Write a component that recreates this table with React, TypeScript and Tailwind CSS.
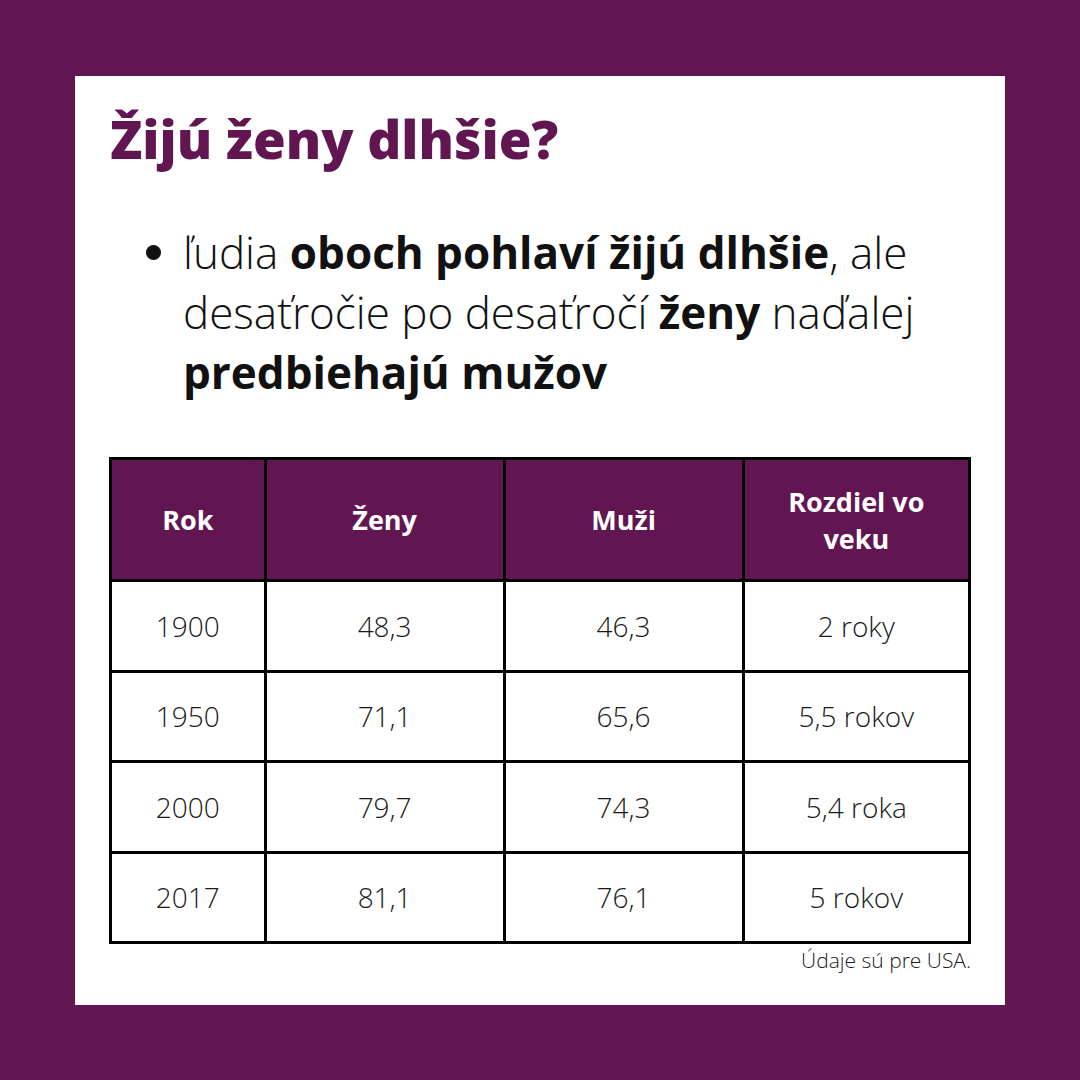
const font = { fontFamily: '"Open Sans", "Noto Sans", sans-serif' };

const rows = [
  ["1900", "48,3", "46,3", "2 roky"],
  ["1950", "71,1", "65,6", "5,5 rokov"],
  ["2000", "79,7", "74,3", "5,4 roka"],
  ["2017", "81,1", "76,1", "5 rokov"],
];

const headers = ["Rok", "Ženy", "Muži", "Rozdiel vo veku"];
const widths = ["w-[155px]", "w-[240px]", "w-[240px]", "w-[227px]"];

export default function App() {
  return (
    <div
      className="w-[1080px] h-[1080px] bg-[#621651] pt-[76px] pl-[75px]"
      style={font}
    >
      <div className="w-[930px] h-[929px] bg-white px-[34px] pt-[28px]">
        <h1 className="pl-[1px] text-[53px] font-extrabold leading-[70px] text-[#621651]">
          Žijú ženy dlhšie?
        </h1>

        <ul className="mt-[48px] pl-[37px]">
          <li className="flex gap-[22px] text-[44px] font-light leading-[60px] text-[#111]">
            <span className="mt-[23px] h-[15px] w-[15px] shrink-0 rounded-full bg-[#111]" />
            <span>
              ľudia <b className="font-bold">oboch pohlaví žijú dlhšie</b>, ale
              desaťročie po desaťročí <b className="font-bold">ženy</b> naďalej{" "}
              <b className="font-bold">predbiehajú mužov</b>
            </span>
          </li>
        </ul>

        <table className="mt-[55px] border-collapse border-[3px] border-black">
          <thead>
            <tr className="h-[122px] bg-[#621651]">
              {headers.map((h, i) => (
                <th
                  key={h}
                  className={`${widths[i]} border-[3px] border-black px-[30px] text-center text-[27px] font-bold leading-[37px] text-white`}
                >
                  {h}
                </th>
              ))}
            </tr>
          </thead>
          <tbody>
            {rows.map((r) => (
              <tr key={r[0]} className="h-[90.5px]">
                {r.map((c, i) => (
                  <td
                    key={i}
                    className={`${widths[i]} border-[3px] border-black text-center text-[28px] font-light text-[#1a1a1a]`}
                  >
                    {c}
                  </td>
                ))}
              </tr>
            ))}
          </tbody>
        </table>

        <p className="mt-[1px] w-[862px] text-right text-[21px] font-light text-[#1a1a1a]">
          Údaje sú pre USA.
        </p>
      </div>
    </div>
  );
}
